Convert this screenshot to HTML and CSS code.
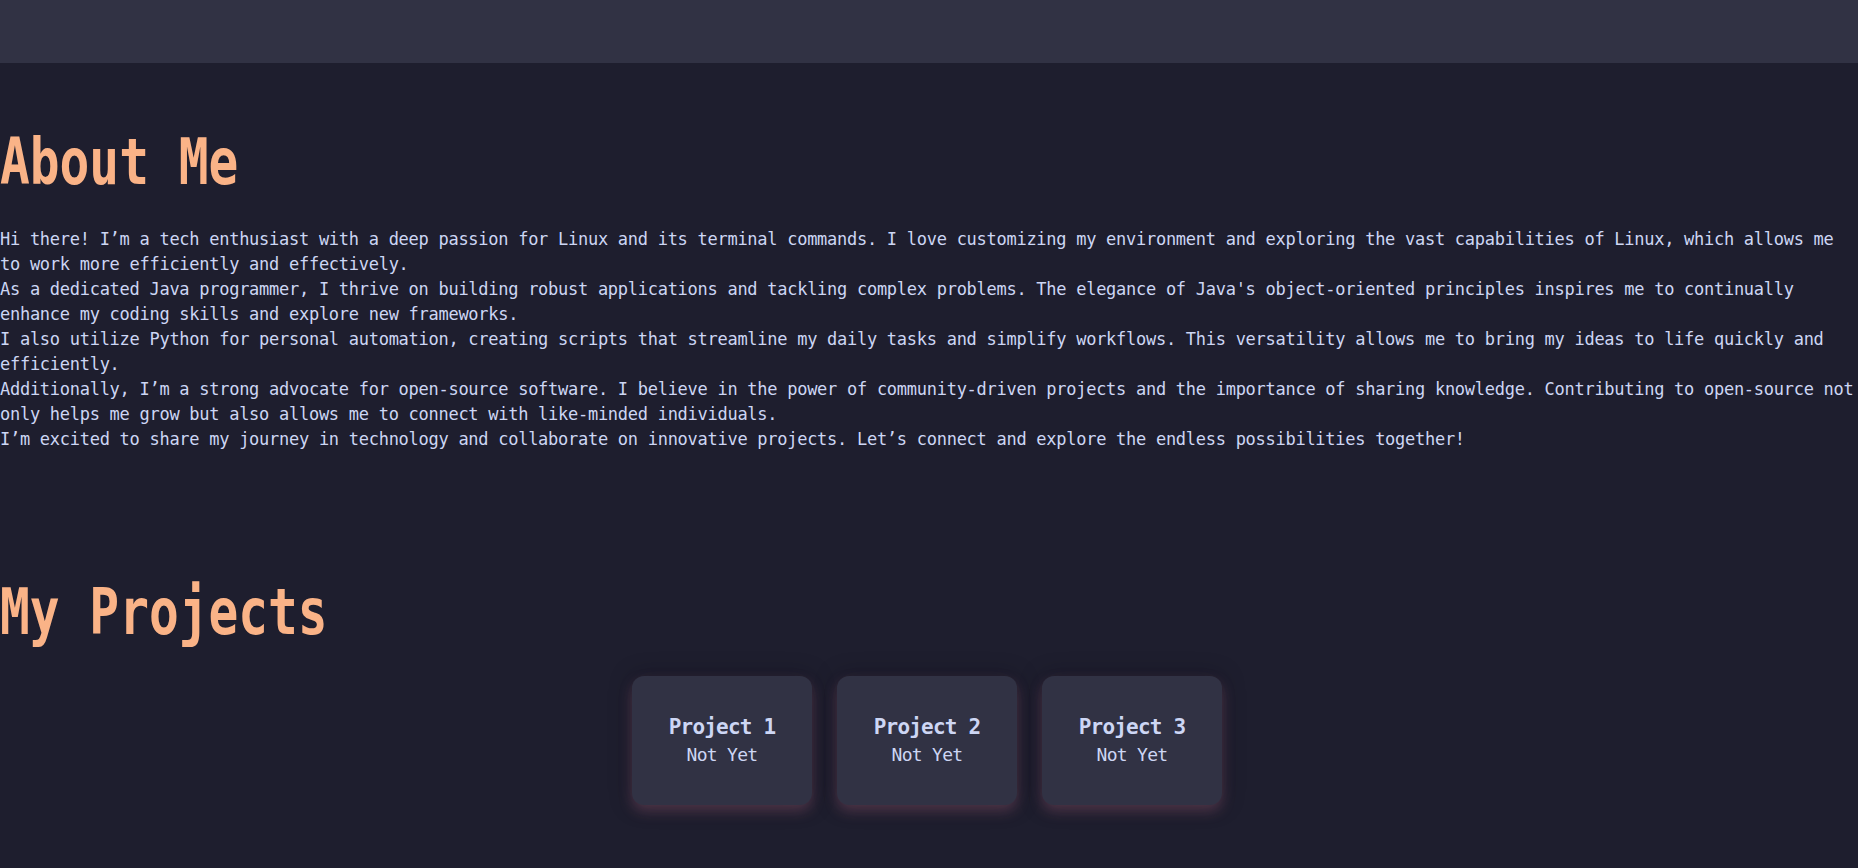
FILE: index.html
```html
<!DOCTYPE html>
<html lang="en">
<head>
<meta charset="utf-8">
<title>About Me</title>
<link rel="stylesheet" href="styles.css">
</head>
<body>
<header class="topbar"></header>
<main class="content">
  <section class="about">
    <h1 class="section-title">About Me</h1>
    <div class="about-text">
      <p>Hi there! I’m a tech enthusiast with a deep passion for Linux and its terminal commands. I love customizing my environment and exploring the vast capabilities of Linux, which allows me to work more efficiently and effectively.</p>
      <p>As a dedicated Java programmer, I thrive on building robust applications and tackling complex problems. The elegance of Java's object-oriented principles inspires me to continually enhance my coding skills and explore new frameworks.</p>
      <p>I also utilize Python for personal automation, creating scripts that streamline my daily tasks and simplify workflows. This versatility allows me to bring my ideas to life quickly and efficiently.</p>
      <p>Additionally, I’m a strong advocate for open-source software. I believe in the power of community-driven projects and the importance of sharing knowledge. Contributing to open-source not only helps me grow but also allows me to connect with like-minded individuals.</p>
      <p>I’m excited to share my journey in technology and collaborate on innovative projects. Let’s connect and explore the endless possibilities together!</p>
    </div>
  </section>
  <section class="projects">
    <h2 class="section-title projects-title">My Projects</h2>
    <div class="project-row">
      <div class="project-card">
        <span class="project-name">Project 1</span>
        <span class="project-status">Not Yet</span>
      </div>
      <div class="project-card">
        <span class="project-name">Project 2</span>
        <span class="project-status">Not Yet</span>
      </div>
      <div class="project-card">
        <span class="project-name">Project 3</span>
        <span class="project-status">Not Yet</span>
      </div>
    </div>
  </section>
</main>
</body>
</html>
```

FILE: styles.css
```css
html, body {
  margin: 0;
  padding: 0;
  overflow: hidden;
}

body {
  background: #1e1e2e;
  color: #cdd6f4;
  font-family: "DejaVu Sans Mono", "Liberation Mono", monospace;
  min-height: 868px;
}

.topbar {
  height: 63px;
  background: #313244;
}

.content {
  display: flex;
  flex-direction: column;
}

.section-title {
  margin: 0;
  font-size: 64px;
  line-height: 64px;
  font-weight: bold;
  color: #fab387;
  transform: scaleX(0.773);
  transform-origin: left center;
  white-space: nowrap;
}

.about .section-title {
  margin-top: 67px;
}

.about-text {
  margin-top: 33px;
}

.about-text p {
  margin: 0;
  font-size: 17px;
  line-height: 25px;
  letter-spacing: -0.27px;
}

.projects-title {
  margin-top: 128px;
}

.project-row {
  display: flex;
  justify-content: center;
  gap: 25px;
  padding-right: 4px;
  margin-top: 32px;
}

.project-card {
  width: 180px;
  height: 129px;
  box-sizing: border-box;
  padding-bottom: 2px;
  border-radius: 12px;
  background: #313244;
  box-shadow: 0 6px 14px rgba(243, 139, 168, 0.24), 0 0 22px rgba(10, 10, 20, 0.35);
  display: flex;
  flex-direction: column;
  align-items: center;
  justify-content: center;
  color: #cdd6f4;
}

.project-name {
  font-size: 21px;
  line-height: 30px;
  font-weight: bold;
  letter-spacing: -0.8px;
  white-space: nowrap;
}

.project-status {
  font-size: 18px;
  line-height: 25px;
  letter-spacing: -0.7px;
  white-space: nowrap;
}
```
